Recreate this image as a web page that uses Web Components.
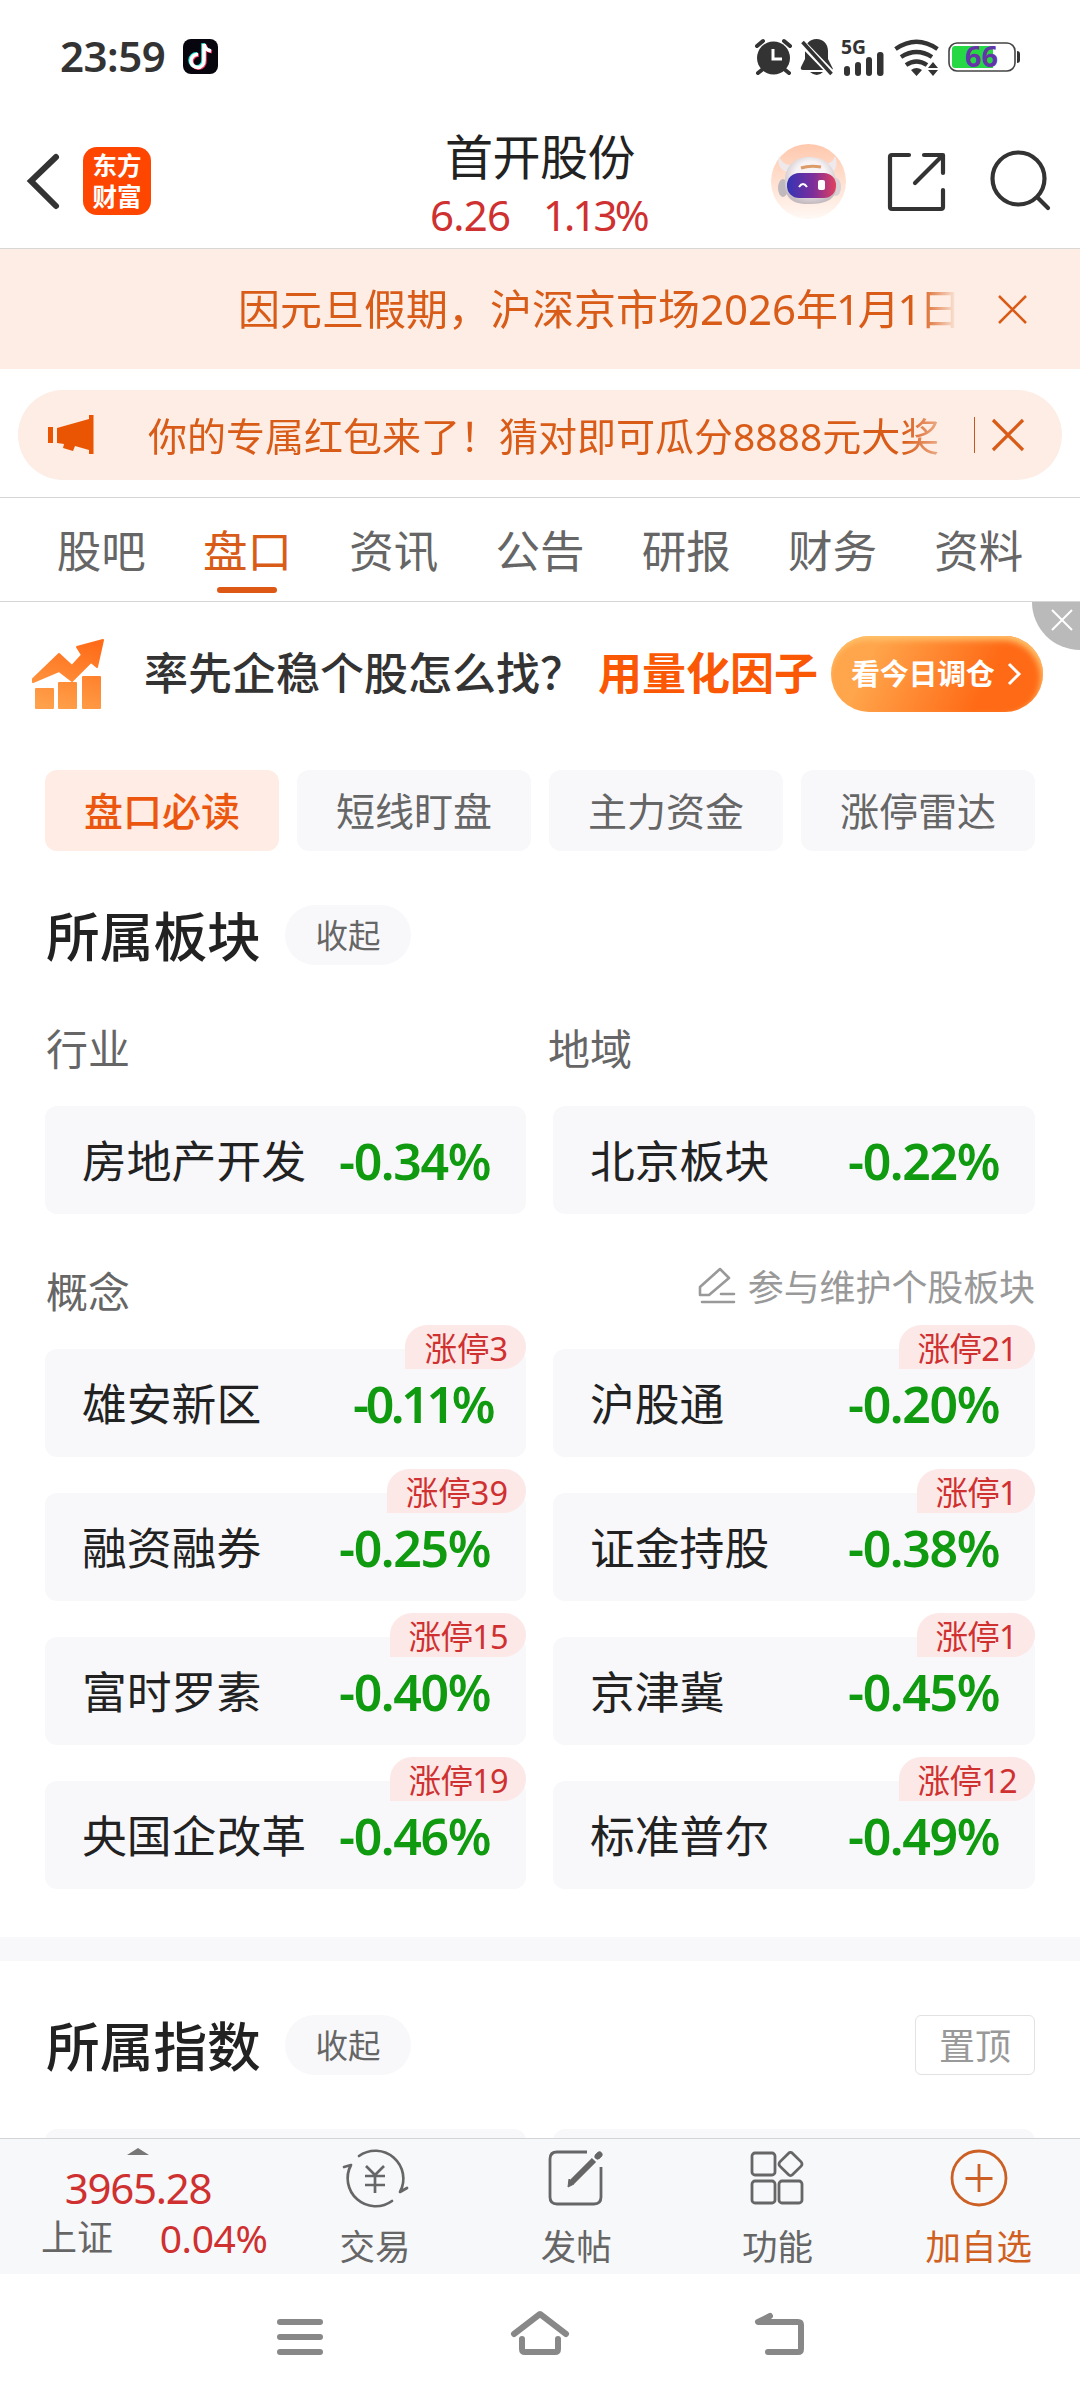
<!DOCTYPE html>
<html lang="zh-CN">
<head>
<meta charset="utf-8">
<title>首开股份</title>
<style>
  body {
    margin: 0;
    width: 1080px;
    height: 2400px;
    overflow: hidden;
    background: #fff;
    color: #222;
    font-family: "Noto Sans", "Noto Sans CJK SC", sans-serif;
  }
  .date { letter-spacing: -2.2px; }
</style>
</head>
<body>
<stock-page></stock-page>

<script>
const define = (name, html) => {
  const template = document.createElement("template");
  template.innerHTML = `<style>:host { display: block; box-sizing: border-box; } * { box-sizing: border-box; } svg { display: block; overflow: visible; }</style>` + html;

  customElements.define(name, class extends HTMLElement {
    constructor() {
      super();
      this.attachShadow({ mode: "open" });
      this.shadowRoot.appendChild(template.content.cloneNode(true));
    }
  });
};

define("status-bar", `
  <style>
    :host { display: flex; height: 114px; padding: 0 60px; color: #333; }
    .time { width: 123px; font-size: 42px; font-weight: 600; line-height: 112px; letter-spacing: -0.5px; }
    .app { margin-top: 39px; }
    .icons { margin: 38px 0 0 auto; }
    text { font-weight: 700; }
  </style>
  <div class="time">23:59</div>
  <svg class="app" width="35" height="35" viewBox="0 0 35 35">
    <rect width="35" height="35" rx="8" fill="#07060f"/>
    <g fill="none" stroke-width="3.6">
      <path d="M15 15.500a6.500 6.500 0 1 0 6 6V5q1 6 7 7" stroke="#25e4e0" transform="translate(-1 -.7)"/>
      <path d="M15 15.500a6.500 6.500 0 1 0 6 6V5q1 6 7 7" stroke="#f52c58" transform="translate(1 .7)"/>
      <path d="M15 15.500a6.500 6.500 0 1 0 6 6V5q1 6 7 7" stroke="#fff"/>
    </g>
  </svg>
  <svg class="icons" width="265" height="40" viewBox="755 38 265 40" fill="#333">
    <circle cx="773.500" cy="58" r="16.500"/>
    <g fill="none" stroke="#333" stroke-width="4" stroke-linecap="round">
      <path d="M757 46l6-5M790 46l-6-5M763 69l-5 4M784 69l5 4"/>
    </g>
    <path d="M773 49v10h9" fill="none" stroke="#fff" stroke-width="3"/>
    <path d="M816.500 39c-7 0-11.500 5-11.500 12v8l-4 8q-1 3 2 3h28q3 0 1-3l-4-8v-8c0-7-4.500-12-11.500-12zM810 72h13q-6 6-13 0z"/>
    <path d="M802 43l30 31" stroke="#fff" stroke-width="7"/>
    <path d="M802.500 42l29 32" stroke="#333" stroke-width="3.600"/>
    <text x="841" y="54" font-size="19" textLength="25" lengthAdjust="spacingAndGlyphs">5G</text>
    <rect x="844" y="66" width="6" height="10" rx="3"/>
    <rect x="855" y="62" width="6" height="14" rx="3"/>
    <rect x="866" y="57" width="6" height="19" rx="3"/>
    <rect x="877" y="52" width="6.500" height="24" rx="3"/>
    <g fill="none" stroke="#333" stroke-width="4.400">
      <path d="M895.500 49q21-14.500 42 0M901 57q15.500-10 31 0M906 65q10.500-7 21 0"/>
    </g>
    <path d="M911 70q5.500-4 11 0l-5.500 6zM928 68l5-6 5 6zM928 70l5 6 5-6z"/>
    <rect x="949" y="43" width="66" height="28" rx="8" fill="#fff" stroke="#444" stroke-width="1.600"/>
    <path d="M955 46h38v22h-38q-3 0-3-3v-16q0-3 3-3z" fill="#27d845"/>
    <path d="M1017 51q3 0 3 3v6q0 3-3 3z"/>
    <text x="965" y="67" font-size="28" fill="#6734a8" textLength="33" lengthAdjust="spacingAndGlyphs">66</text>
  </svg>
`);

define("quote-header", `
  <style>
    :host { display: flex; height: 135px; border-bottom: 1px solid #d9d7d6; }
    .left { width: 400px; display: flex; padding: 33px 0 0 27px; gap: 24px; }
    .back { margin-top: 7px; }
    .logo { width: 68px; height: 68px; border-radius: 14px; background: #ff4600; color: #fff; text-align: center; font-weight: 700; font-size: 24.500px; line-height: 31px; padding-top: 3px; }
    .quote { width: 280px; text-align: center; padding-top: 15px; }
    .name { font-size: 48px; line-height: 56px; letter-spacing: -0.500px; }
    .nums { display: flex; padding-left: 30px; color: #cf3030; font-size: 42px; line-height: 60px; letter-spacing: -0.800px; }
    .nums span:first-child { width: 113px; text-align: left; }
    .nums span:last-child { letter-spacing: -2.900px; }
    .right { width: 400px; padding: 30px 0 0 91px; }
  </style>
  <div class="left">
    <svg class="back" width="32" height="54" viewBox="0 0 32 54"><path d="M29 3L4 27l25 25" fill="none" stroke="#333" stroke-width="6" stroke-linecap="round"/></svg>
    <div class="logo">东方<br>财富</div>
  </div>
  <div class="quote">
    <div class="name">首开股份</div>
    <div class="nums"><span>6.26</span><span>1.13%</span></div>
  </div>
  <div class="right">
    <svg width="282" height="75" viewBox="771 144 282 75">
      <defs>
        <linearGradient id="bg" x2="0" y2="1"><stop stop-color="#ffc8ad"/><stop offset="1" stop-color="#fff8f4"/></linearGradient>
        <linearGradient id="face"><stop stop-color="#3534b5"/><stop offset=".55" stop-color="#7f2e99"/><stop offset="1" stop-color="#e2405d"/></linearGradient>
        <radialGradient id="head" cy=".4" r=".6"><stop offset=".5" stop-color="#f8f4f6"/><stop offset="1" stop-color="#c4bbc0"/></radialGradient>
      </defs>
      <circle cx="808.500" cy="181.500" r="37.500" fill="url(#bg)"/>
      <ellipse cx="783" cy="188" rx="5" ry="9" fill="#bfb8bd"/>
      <ellipse cx="836" cy="187" rx="5" ry="9" fill="#d8d1d5"/>
      <path d="M779 156q-3 12 8 16l8-7q-12 2-16-9zM835 156q4 10-2 16l-10-8q9 1 12-8z" fill="#efe9ec"/>
      <path d="M785 181c0-15 10-24 24-24 16 0 26 9 27 25 2 17-8 22-28 22-17 0-24-7-23-23z" fill="url(#head)"/>
      <rect x="787" y="173" width="49" height="25" rx="12" fill="url(#face)"/>
      <path d="M799 187q4-6 8 0" fill="none" stroke="#fff" stroke-width="2"/>
      <rect x="818" y="180" width="7" height="10" rx="2" fill="#fff"/>
      <path d="M801 168q9-3 20-1" fill="none" stroke="#dc9b69" stroke-width="3"/>
      <g fill="none" stroke="#333" stroke-width="4.200" stroke-linecap="round" stroke-linejoin="round">
        <path d="M909 155h-17q-2 0-2 2v50q0 2 2 2h49q2 0 2-2v-17M924 155h19v18M942 156l-27 27"/>
        <circle cx="1018.500" cy="178.500" r="26"/>
        <path d="M1038 198l10 10"/>
      </g>
    </svg>
  </div>
`);

define("notice-bar", `
  <style>
    :host { display: flex; height: 120px; background: #fdede4; color: #d95b18; align-items: center; }
    .text { width: 955px; padding-left: 238px; font-size: 42px; line-height: 60px; white-space: nowrap; overflow: hidden; -webkit-mask-image: linear-gradient(90deg, #000 920px, transparent 958px); }
    svg { margin-left: 43px; }
  </style>
  <div class="text"><slot></slot></div>
  <svg width="29" height="29" viewBox="0 0 29 29"><path d="M1 1l27 27M28 1L1 28" stroke="#d95b18" stroke-width="2.500"/></svg>
`);

define("promo-pill", `
  <style>
    :host { display: flex; align-items: center; height: 90px; margin: 21px 18px 17px; border-radius: 45px; background: #fdede4; color: #d95b18; }
    .horn { margin-left: 30px; }
    .text { width: 812px; margin-left: 54px; font-size: 39px; line-height: 55px; white-space: nowrap; -webkit-mask-image: linear-gradient(90deg, #000 755px, rgba(0,0,0,.4) 795px); }
    .bar { width: 1px; height: 36px; margin-left: 14px; background: #c4571c; }
    .close { margin-left: 17px; }
  </style>
  <svg class="horn" width="46" height="40" viewBox="0 0 46 40" fill="#ea5504"><path d="M0 12h5v16H0zM9 13L41 4V0h4.500v39H41v-4L27 31l-2 5-10-3 1-4-7-1z"/></svg>
  <div class="text"><slot></slot></div>
  <div class="bar"></div>
  <svg class="close" width="32" height="32" viewBox="0 0 32 32"><path d="M1 1l30 30M31 1L1 31" stroke="#d95b18" stroke-width="3.200"/></svg>
`);

define("tab-item", `
  <style>
    :host { width: 146.300px; height: 103px; text-align: center; font-size: 44.500px; line-height: 106px; color: #666; position: relative; }
    :host([active]) { color: #d95b18; }
    :host([active])::after { content: ""; position: absolute; left: 43px; bottom: 8px; width: 60px; height: 6px; border-radius: 3px; background: #dd5814; }
  </style>
  <slot></slot>
`);

define("tab-row", `
  <style>
    :host { display: flex; height: 105px; padding: 0 28px; border-top: 1px solid #d5d5d8; border-bottom: 1px solid #d5d5d8; }
  </style>
  <slot></slot>
`);

define("ad-strip", `
  <style>
    :host { display: flex; height: 168px; position: relative; font-weight: 700; font-size: 44px; line-height: 143px; }
    .chart { margin: 37px 0 0 31px; }
    .ask { margin-left: 40px; width: 454px; color: #333; font-weight: 500; white-space: nowrap; }
    .hot { width: 233px; color: #fb5806; }
    .go { width: 212px; height: 76px; margin-top: 34px; border-radius: 38px; display: flex; align-items: center; padding-left: 20px; font-size: 29px; line-height: 70px; letter-spacing: -0.300px; color: #fff; background: linear-gradient(115deg, #ffa54b 20%, #ff6a16 72%); box-shadow: inset -2px 4px 6px #ffc36c; }
    .go svg { margin-left: 12px; }
    .off { position: absolute; right: 0; top: 0; width: 48px; height: 48px; border-bottom-left-radius: 48px; background: #bababa; padding: 8px 0 0 20px; }
  </style>
  <svg class="chart" width="73" height="71" viewBox="0 0 73 71">
    <defs><linearGradient id="o" gradientUnits="userSpaceOnUse" x1="50" y1="0" x2="30" y2="71"><stop stop-color="#ff6b18"/><stop offset="1" stop-color="#ffa04a"/></linearGradient></defs>
    <g fill="url(#o)" stroke="url(#o)" stroke-linejoin="round" stroke-width="2">
      <path d="M2 40L28 15 41 27 51 16 46 8 72 1 66 28 60 23 41 42 28 32 2 43z"/>
      <rect x="5" y="50" width="17" height="19"/><rect x="28" y="44" width="17" height="25"/><rect x="52" y="38" width="17" height="31"/>
    </g>
  </svg>
  <div class="ask">率先企稳个股怎么找？</div>
  <div class="hot">用量化因子</div>
  <div class="go">看今日调仓<svg width="14" height="24" viewBox="0 0 14 24"><path d="M2 2l10 10L2 22" fill="none" stroke="#fff" stroke-width="3"/></svg></div>
  <div class="off"><svg width="20" height="20" viewBox="0 0 20 20"><path d="M0 0l20 20M20 0L0 20" stroke="#fff" stroke-width="2"/></svg></div>
`);

define("filter-chip", `
  <style>
    :host { flex: 1; height: 81px; border-radius: 12px; background: #f8f8fb; color: #666; text-align: center; font-size: 39px; line-height: 81px; }
    :host([active]) { background: #ffede5; color: #ec5710; font-weight: 500; }
  </style>
  <slot></slot>
`);

define("section-head", `
  <style>
    :host { display: flex; height: 60px; align-items: center; }
    .title { width: 240px; padding-left: 1px; white-space: nowrap; font-size: 53.700px; font-weight: 500; line-height: 60px; position: relative; top: 2px; }
    .fold { width: 126px; height: 60px; border-radius: 30px; background: #f8f8fb; color: #666; font-size: 32.500px; line-height: 62px; text-align: center; }
    .end { margin-left: auto; }
  </style>
  <div class="title"><slot></slot></div>
  <div class="fold">收起</div>
  <div class="end"><slot name="end"></slot></div>
`);

define("board-card", `
  <style>
    :host { position: relative; display: flex; justify-content: space-between; height: 108px; padding: 0 34px 0 37px; border-radius: 12px; background: #f8f8fb; line-height: 110px; font-size: 44.800px; white-space: nowrap; }
    .pct { margin-right: 2px; color: #109a10; font-size: 50px; font-weight: 600; letter-spacing: -1.400px; line-height: 110px; }
    .pct.narrow { margin-right: 0; letter-spacing: -3.400px; }
    .tag { position: absolute; right: 0; top: -24px; height: 44px; padding: 0 18px 0 19px; border-radius: 22px 22px 22px 0; background: #fde8e8; color: #cf3030; font-size: 32.500px; line-height: 47px; }
    .tag.narrow { letter-spacing: -0.700px; }
    .tag:empty { display: none; }
  </style>
  <span class="name"></span><span class="pct"></span><span class="tag"></span>
`);

define("board-grid", `
  <style>
    :host { display: grid; grid-template-columns: 481px 482px; gap: 36px 27px; }
  </style>
  <slot></slot>
`);

define("edit-link", `
  <style>
    :host { display: flex; gap: 13px; color: #999; font-size: 36px; line-height: 50px; letter-spacing: -0.100px; }
    svg { margin-top: 4px; }
  </style>
  <svg width="36" height="37" viewBox="0 0 36 37" fill="none" stroke="#999" stroke-width="2.600" stroke-linejoin="round" stroke-linecap="round"><path d="M21 2l9 9L10 28H1v-8zM22 27h13M3 35h32"/></svg>
  <span><slot></slot></span>
`);

define("tool-item", `
  <style>
    :host { width: 201.200px; display: flex; flex-direction: column; align-items: center; color: #666; font-size: 35.500px; line-height: 48px; padding-top: 10px; gap: 13px; }
    :host([active]) { color: #d0601f; }
  </style>
  <slot name="icon"></slot>
  <span><slot></slot></span>
`);

define("tool-bar", `
  <style>
    :host { position: absolute; left: 0; top: 2138px; width: 1080px; height: 136px; display: flex; border-top: 1px solid #d2d5d8; background: #f7f8fa; }
    .index { width: 274.500px; padding-top: 9px; }
    .index svg { margin-left: 127px; }
    .value { width: 276px; text-align: center; color: #cf3030; font-size: 42px; line-height: 52px; letter-spacing: -1.300px; margin-top: 7px; }
    .row { display: flex; justify-content: space-between; padding: 0 7px 0 41px; font-size: 36px; line-height: 48px; color: #666; }
    .row b { font-weight: 400; font-size: 39px; color: #cf3030; letter-spacing: -0.400px; }
  </style>
  <div class="index">
    <svg width="22" height="7" viewBox="0 0 22 7"><path d="M0 7L11 0l11 7z" fill="#777"/></svg>
    <div class="value">3965.28</div>
    <div class="row"><span>上证</span><b>0.04%</b></div>
  </div>
  <slot></slot>
`);

define("system-nav", `
  <style>
    :host { position: absolute; left: 0; top: 2274px; width: 1080px; height: 126px; background: #fff; }
  </style>
  <svg width="1080" height="126" viewBox="0 2274 1080 126" fill="none" stroke="#888" stroke-width="6" stroke-linecap="round" stroke-linejoin="round">
    <path d="M280 2322h40M280 2337h40M280 2352h40"/>
    <path d="M514 2334l26-20 26 20M522 2339v10q0 3 3 3h30q3 0 3-3v-10"/>
    <path d="M770 2316l-12 6h40q3 0 3 3v24q0 3-3 3h-30"/>
  </svg>
`);

define("stock-page", `
  <style>
    :host { position: relative; height: 2400px; overflow: hidden; }
    .chips { display: flex; gap: 18px; padding: 0 45px; }
    .section { padding: 0 45px; }
    .labels { display: grid; grid-template-columns: 502px 1fr; color: #666; font-size: 42px; line-height: 60px; padding: 54px 0 0 1px; margin-bottom: 27px; }
    .labels.concept { display: flex; justify-content: space-between; height: 135px; padding-top: 48px; margin: 0; }
    edit-link { margin-top: 1px; }
    .band { height: 24px; margin: 48px 0 54px; background: #f8f8fa; }
    .pin { width: 120px; height: 60px; border: 1px solid #e2e2e2; border-radius: 6px; color: #999; font-size: 36px; line-height: 61px; text-align: center; }
  </style>
  <status-bar></status-bar>
  <quote-header></quote-header>
  <notice-bar>因元旦假期，沪深京市场2026<slot name="date"></slot></notice-bar>
  <promo-pill>你的专属红包来了！猜对即可瓜分8888元大奖</promo-pill>
  <tab-row>
    <tab-item>股吧</tab-item>
    <tab-item active>盘口</tab-item>
    <tab-item>资讯</tab-item>
    <tab-item>公告</tab-item>
    <tab-item>研报</tab-item>
    <tab-item>财务</tab-item>
    <tab-item>资料</tab-item>
  </tab-row>
  <ad-strip></ad-strip>
  <div class="chips">
    <filter-chip active>盘口必读</filter-chip>
    <filter-chip>短线盯盘</filter-chip>
    <filter-chip>主力资金</filter-chip>
    <filter-chip>涨停雷达</filter-chip>
  </div>
  <div class="section" style="padding-top: 54px">
    <section-head>所属板块</section-head>
    <div class="labels"><span>行业</span><span>地域</span></div>
    <board-grid id="area"></board-grid>
    <div class="labels concept"><span>概念</span><edit-link>参与维护个股板块</edit-link></div>
    <board-grid id="concept"></board-grid>
  </div>
  <div class="band"></div>
  <div class="section">
    <section-head>所属指数<div class="pin" slot="end">置顶</div></section-head>
    <board-grid id="indices" style="margin-top: 54px"></board-grid>
  </div>
  <tool-bar>
    <tool-item>
      <svg slot="icon" width="66" height="60" viewBox="0 0 66 60" fill="none" stroke="#666" stroke-width="2.700" stroke-linecap="round" stroke-linejoin="round">
        <path d="M17 7A28 28 0 0 1 58 43l7-4M50 52A28 28 0 0 1 9 16l-7 2"/>
        <path d="M24 17l9 9 9-9M33 26v18M23 27h20M23 36h20" stroke-linecap="butt"/>
      </svg>交易
    </tool-item>
    <tool-item>
      <svg slot="icon" width="56" height="60" viewBox="0 0 56 60" fill="none" stroke="#666" stroke-width="2.800">
        <path d="M39 3H9Q2 3 2 10v38q0 7 7 7h37q7 0 7-7V18"/>
        <path d="M46 11L24 33M49 8l3-3" stroke-width="6"/><path d="M49.500 7.500l2-2" stroke-width="6" stroke-linecap="round"/>
        <path d="M21 30l5 5-6 3z" fill="#666" stroke="#666" stroke-width="1"/>
      </svg>发帖
    </tool-item>
    <tool-item>
      <svg slot="icon" width="54" height="60" viewBox="0 0 54 60" fill="none" stroke="#666" stroke-width="2.800">
        <rect x="2" y="4" width="23" height="22" rx="3"/><rect x="2" y="32" width="23" height="22" rx="3"/><rect x="29" y="32" width="23" height="22" rx="3"/>
        <rect x="31.500" y="6" width="18" height="18" rx="3" transform="rotate(45 40.500 15)"/>
      </svg>功能
    </tool-item>
    <tool-item active>
      <svg slot="icon" width="58" height="60" viewBox="0 0 58 60" fill="none" stroke="#cc6024" stroke-width="2.800">
        <circle cx="29" cy="29" r="27"/><path d="M29 15v28M15.500 29.500h27"/>
      </svg>加自选
    </tool-item>
  </tool-bar>
  <system-nav></system-nav>
`);

const boards = {
  area: [["房地产开发", "-0.34%"], ["北京板块", "-0.22%"]],
  concept: [
    ["雄安新区", "-0.11%", "涨停3"], ["沪股通", "-0.20%", "涨停21"],
    ["融资融券", "-0.25%", "涨停39"], ["证金持股", "-0.38%", "涨停1"],
    ["富时罗素", "-0.40%", "涨停15"], ["京津冀", "-0.45%", "涨停1"],
    ["央国企改革", "-0.46%", "涨停19"], ["标准普尔", "-0.49%", "涨停12"]
  ],
  indices: [["", ""], ["", ""]]
};

const stock = document.querySelector("stock-page");
stock.innerHTML = `<span slot="date" class="date">年1月1日</span>`;

const page = stock.shadowRoot;
for (const id in boards) {
  boards[id].forEach(([name, pct, tag = ""]) => {
    const card = document.createElement("board-card");
    const set = (cls, text) => {
      const el = card.shadowRoot.querySelector(cls);
      el.textContent = text;
      el.classList.toggle("narrow", text.includes("1"));
    };
    set(".name", name);
    set(".pct", pct);
    set(".tag", tag);
    page.getElementById(id).appendChild(card);
  });
}
</script>
</body>
</html>
